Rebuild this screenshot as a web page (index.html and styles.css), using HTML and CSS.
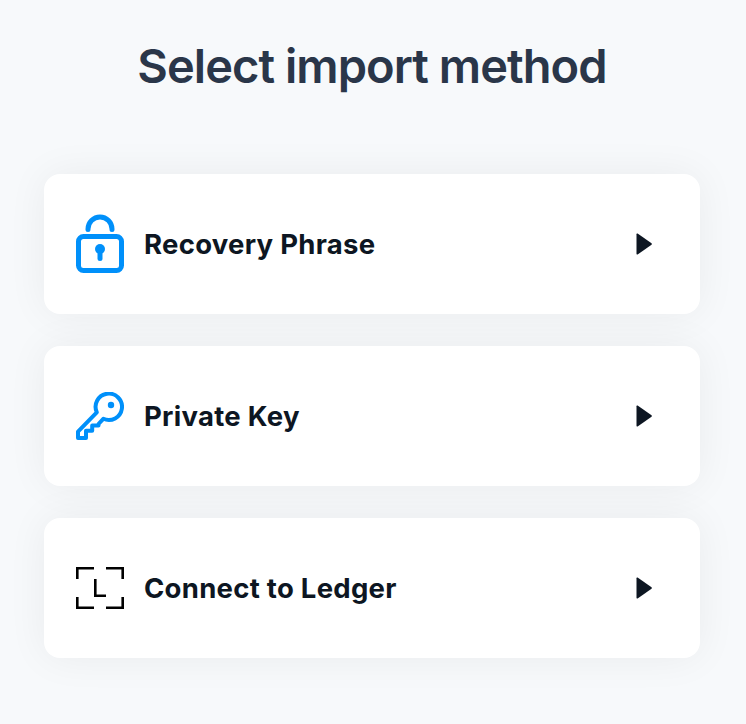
FILE: index.html
```html
<!DOCTYPE html>
<html lang="en">
<head>
<meta charset="utf-8">
<title>Select import method</title>
<link rel="stylesheet" href="styles.css">
</head>
<body>
<main class="page">
  <h1 class="title">Select import method</h1>
  <div class="methods">
    <button class="card" type="button">
      <svg class="icon" width="48" height="60" viewBox="0 0 48 60" fill="none" stroke="#0090fa" stroke-width="5" stroke-linecap="round">
        <path d="M12 15.5v-.5a12 12 0 0 1 24 0v.5"/>
        <rect x="2.5" y="22.5" width="43" height="34" rx="5"/>
        <circle cx="24" cy="35" r="5" fill="#0090fa" stroke="none"/>
        <path d="M24 36v8.5"/>
      </svg>
      <span class="label">Recovery Phrase</span>
      <svg class="arrow" width="16" height="22" viewBox="0 0 16 22"><path d="M.5 1.2Q.5 0 1.6.6L15.2 10Q16.6 11 15.2 12L1.6 21.4Q.5 22 .5 20.8Z"/></svg>
    </button>
    <button class="card" type="button">
      <svg class="icon" width="48" height="48" viewBox="0 0 48 48" fill="none" stroke="#0090fa" stroke-width="4" stroke-linejoin="round">
        <path d="M20.8 20.3A13.2 13.2 0 1 1 27.3 26.8L22.5 32v1.5H16.2v5.3H10V46H2v-6.4Z"/>
        <circle cx="35" cy="13" r="3.2" fill="#0090fa" stroke="none"/>
      </svg>
      <span class="label">Private Key</span>
      <svg class="arrow" width="16" height="22" viewBox="0 0 16 22"><path d="M.5 1.2Q.5 0 1.6.6L15.2 10Q16.6 11 15.2 12L1.6 21.4Q.5 22 .5 20.8Z"/></svg>
    </button>
    <button class="card" type="button">
      <svg class="icon" width="48" height="42" viewBox="0 0 48 42" fill="none" stroke="#000" stroke-width="2.6">
        <path d="M1.3 12V1.3H18M30 1.3h16.7V12M46.7 30v10.7H30M18 40.7H1.3V30M19.3 12v16.7H30"/>
      </svg>
      <span class="label">Connect to Ledger</span>
      <svg class="arrow" width="16" height="22" viewBox="0 0 16 22"><path d="M.5 1.2Q.5 0 1.6.6L15.2 10Q16.6 11 15.2 12L1.6 21.4Q.5 22 .5 20.8Z"/></svg>
    </button>
  </div>
</main>
</body>
</html>
```
FILE: styles.css
```css
* {
  box-sizing: border-box;
}

body {
  margin: 0;
  min-height: 724px;
  background: #f7f9fb;
  font-family: Inter, "Liberation Sans", sans-serif;
}

.page {
  padding: 36px 46px 66px 44px;
}

.title {
  margin: 0 0 78px;
  color: #2a3649;
  font-size: 47px;
  font-weight: 600;
  line-height: 60px;
  letter-spacing: -0.95px;
  text-align: center;
  white-space: nowrap;
}

.methods {
  display: flex;
  flex-direction: column;
  gap: 32px;
}

.card {
  display: flex;
  align-items: center;
  width: 100%;
  height: 140px;
  padding: 0 48px 0 32px;
  border: 0;
  border-radius: 16px;
  background: #fff;
  box-shadow: 0 0 40px rgba(0, 0, 0, 0.06);
  color: #0d1622;
  font-family: inherit;
  text-align: left;
}

.icon {
  flex: none;
  margin-right: 20px;
}

.label {
  flex: 1;
  font-size: 27.5px;
  font-weight: 700;
  line-height: 40px;
  letter-spacing: 0.28px;
  white-space: nowrap;
}

.arrow {
  flex: none;
  fill: #0d1622;
}
```
